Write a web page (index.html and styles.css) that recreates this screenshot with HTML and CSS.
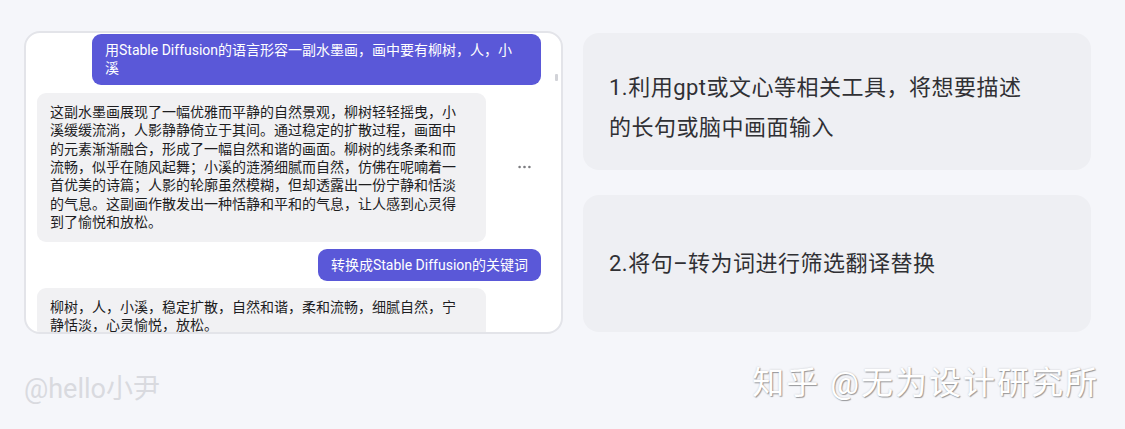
FILE: index.html
```html
<!DOCTYPE html>
<html lang="zh-CN">
<head>
    <meta charset="UTF-8">
    <meta name="viewport" content="width=device-width, initial-scale=1.0">
    <title>Stable Diffusion 关键词</title>
    <link rel="stylesheet" href="styles.css">
</head>
<body>
    <div class="page">
        <div class="main">
            <!-- 对话窗口 -->
            <div class="chat">
                <span class="scroll-thumb"></span>
                <div class="messages">
                    <div class="msg-user msg-long">用Stable Diffusion的语言形容一副水墨画，画中要有柳树，人，小溪</div>
                    <div class="msg-row">
                        <div class="msg-bot">这副水墨画展现了一幅优雅而平静的自然景观，柳树轻轻摇曳，小溪缓缓流淌，人影静静倚立于其间。通过稳定的扩散过程，画面中的元素渐渐融合，形成了一幅自然和谐的画面。柳树的线条柔和而流畅，似乎在随风起舞；小溪的涟漪细腻而自然，仿佛在呢喃着一首优美的诗篇；人影的轮廓虽然模糊，但却透露出一份宁静和恬淡的气息。这副画作散发出一种恬静和平和的气息，让人感到心灵得到了愉悦和放松。</div>
                        <svg class="more" width="13" height="4" viewBox="0 0 13 4">
                            <circle cx="1.6" cy="2" r="1.3"/>
                            <circle cx="6.5" cy="2" r="1.3"/>
                            <circle cx="11.4" cy="2" r="1.3"/>
                        </svg>
                    </div>
                    <div class="msg-user">转换成Stable Diffusion的关键词</div>
                    <div class="msg-row">
                        <div class="msg-bot">柳树，人，小溪，稳定扩散，自然和谐，柔和流畅，细腻自然，宁静恬淡，心灵愉悦，放松。</div>
                    </div>
                </div>
            </div>

            <!-- 步骤说明 -->
            <div class="steps">
                <div class="step step-first">1.利用gpt或文心等相关工具，将想要描述的长句或脑中画面输入</div>
                <div class="step">2.将句–转为词进行筛选翻译替换</div>
            </div>
        </div>

        <div class="footer">
            <span class="author">@hello小尹</span>
            <span class="zhihu">知乎 @无为设计研究所</span>
        </div>
    </div>
</body>
</html>
```

FILE: styles.css
```css
/* Estilos generales */
body {
    margin: 0;
    background-color: #f5f6fa;
    font-family: Roboto, "Noto Sans CJK SC", sans-serif;
    color: #1d1d1f;
}
.page {
    padding: 31px 26px 0 24px;
}
.main {
    display: flex;
    gap: 20px;
}

/* Ventana del chat */
.chat {
    position: relative;
    box-sizing: border-box;
    width: 539px;
    height: 303px;
    border: 2px solid #e3e4e9;
    border-radius: 16px;
    background-color: #ffffff;
    overflow: hidden;
}
.scroll-thumb {
    position: absolute;
    top: 41px;
    right: 3px;
    width: 3px;
    height: 7px;
    border-radius: 1px;
    background-color: #d2d3d8;
}
.messages {
    display: flex;
    flex-direction: column;
    gap: 7px;
    padding: 1px 20px 0 11px;
    font-size: 14px;
    line-height: 18.4px;
}
.msg-user {
    align-self: flex-end;
    max-width: 423px;
    padding: 7px 13px;
    border-radius: 9px;
    background-color: #5a58d8;
    color: #ffffff;
}
.msg-long {
    box-sizing: border-box;
    width: 449px;
    max-width: none;
    padding-right: 28px;
    margin-bottom: 1px;
}
.msg-row {
    display: flex;
    align-items: center;
}
.msg-bot {
    box-sizing: border-box;
    width: 449px;
    padding: 10px 23px 10px 13px;
    border-radius: 9px;
    background-color: #f1f1f3;
}
.more {
    margin-left: 32px;
    fill: #7c7c80;
}

/* Tarjetas de pasos */
.steps {
    display: flex;
    flex-direction: column;
    gap: 25px;
    margin-top: 2px;
}
.step {
    box-sizing: border-box;
    display: flex;
    align-items: center;
    width: 508px;
    height: 137px;
    padding: 0 62px 0 26px;
    border-radius: 16px;
    background-color: #eeeff3;
    color: #303034;
    font-size: 22px;
    line-height: 40px;
    letter-spacing: 0.5px;
}
.step-first {
    padding-top: 13px;
}

/* Marcas de agua */
.footer {
    display: flex;
    justify-content: space-between;
    align-items: flex-start;
    margin-top: 31px;
}
.author {
    margin-top: 9px;
    font-size: 27px;
    line-height: 30px;
    color: #d9dadf;
}
.zhihu {
    font-size: 32px;
    line-height: 36px;
    letter-spacing: 2px;
    color: #ffffff;
    text-shadow: 1px 1px 1px rgba(0, 0, 0, 0.35), 0 0 2px rgba(0, 0, 0, 0.2);
}
```
